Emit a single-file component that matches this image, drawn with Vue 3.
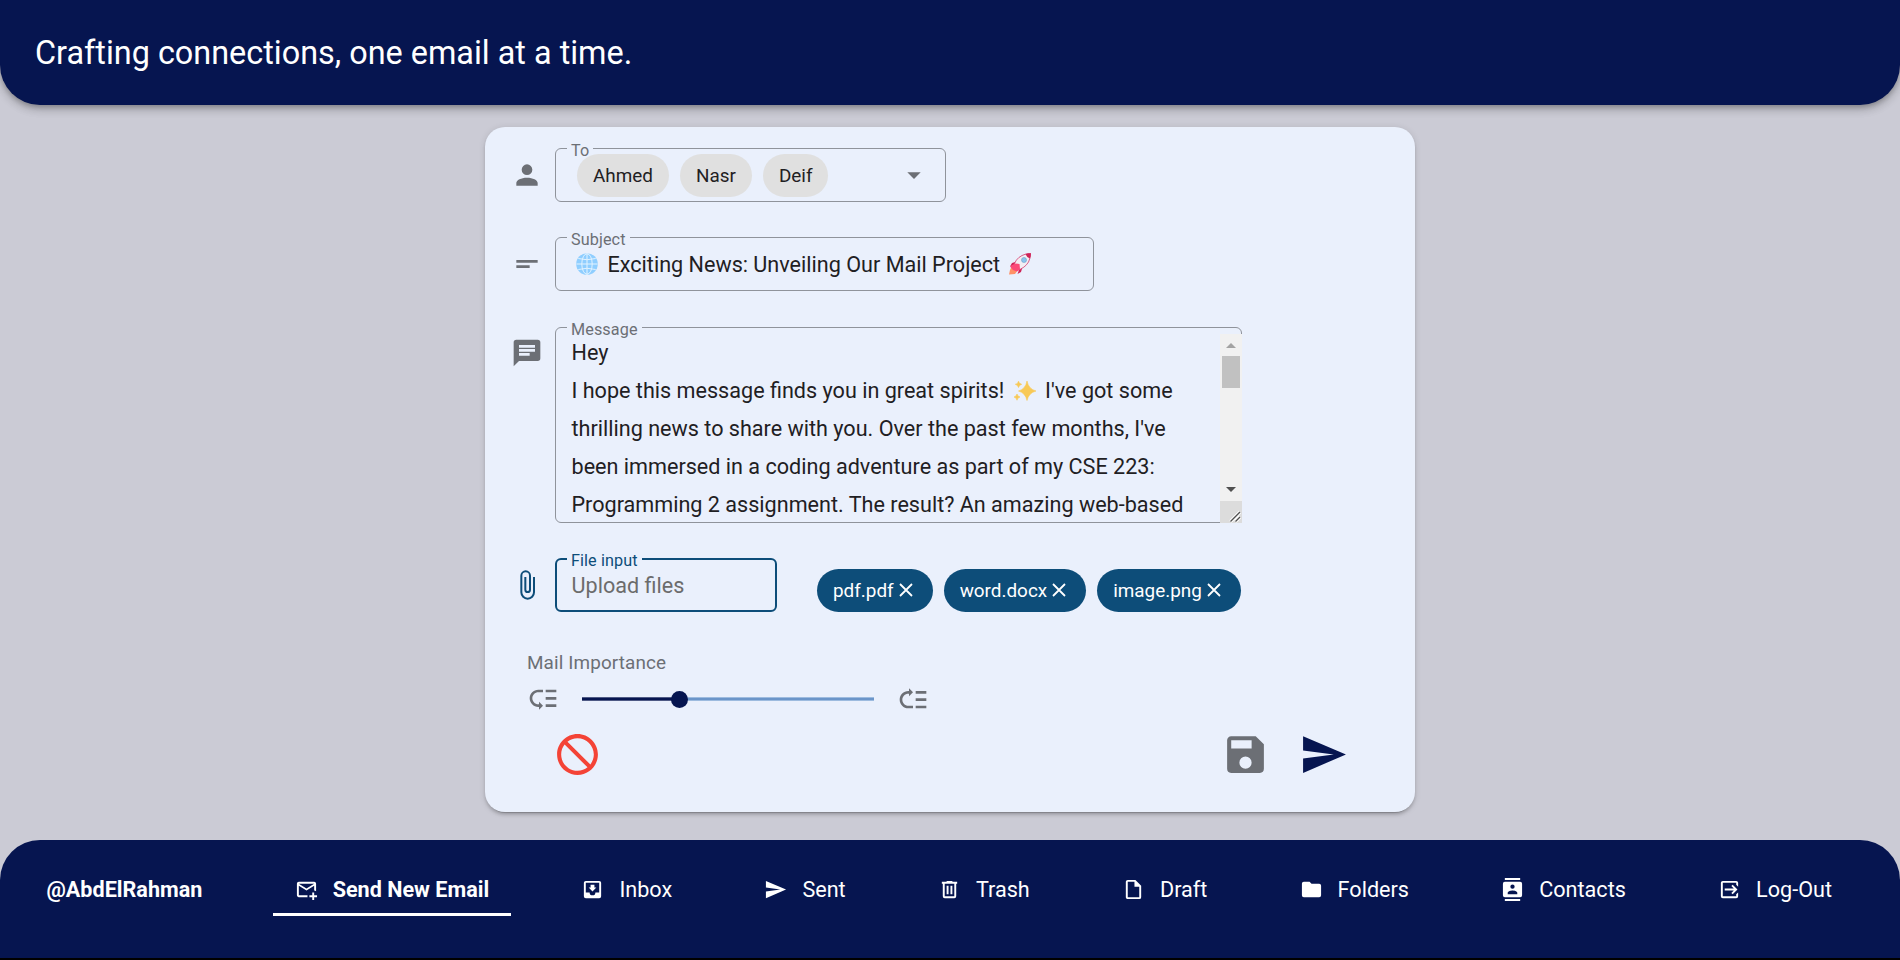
<script setup>
import { ref } from 'vue'

const recipients = ref(['Ahmed', 'Nasr', 'Deif'])
const files = ref(['pdf.pdf', 'word.docx', 'image.png'])
const importance = ref(33.4)

const icons = {
  account: 'M12,4A4,4 0 0,1 16,8A4,4 0 0,1 12,12A4,4 0 0,1 8,8A4,4 0 0,1 12,4M12,14C16.42,14 20,15.79 20,18V20H4V18C4,15.79 7.58,14 12,14Z',
  short: 'M4,9H20V11H4V9M4,13H14V15H4V13Z',
  comment: 'M20 2H4A2 2 0 0 0 2 4V22L6 18H20A2 2 0 0 0 22 16V4A2 2 0 0 0 20 2M6 9H18V11H6M14 14H6V12H14M18 8H6V6H18Z',
  clip: 'M16.5,6V17.5A4,4 0 0,1 12.5,21.5A4,4 0 0,1 8.5,17.5V5A2.5,2.5 0 0,1 11,2.5A2.5,2.5 0 0,1 13.5,5V15.5A1,1 0 0,1 12.5,16.5A1,1 0 0,1 11.5,15.5V6H10V15.5A2.5,2.5 0 0,0 12.5,18A2.5,2.5 0 0,0 15,15.5V5A4,4 0 0,0 11,1A4,4 0 0,0 7,5V17.5A5.5,5.5 0 0,0 12.5,23A5.5,5.5 0 0,0 18,17.5V6H16.5Z',
  down: 'M7,10L12,15L17,10H7Z',
  low: 'M14,5H22V7H14V5M14,10.5H22V12.5H14V10.5M14,16H22V18H14V16M2,11.5C2,15.08 4.92,18 8.5,18H9V20L12,17L9,14V16H8.5C6,16 4,14 4,11.5C4,9 6,7 8.5,7H12V5H8.5C4.92,5 2,7.92 2,11.5Z',
  high: 'M14,19H22V17H14V19M14,13.5H22V11.5H14V13.5M14,8H22V6H14V8M2,12.5C2,8.92 4.92,6 8.5,6H9V4L12,7L9,10V8H8.5C6,8 4,10 4,12.5C4,15 6,17 8.5,17H12V19H8.5C4.92,19 2,16.08 2,12.5Z',
  cancel: 'M12 2C17.5 2 22 6.5 22 12S17.5 22 12 22 2 17.5 2 12 6.5 2 12 2M12 4C10.1 4 8.4 4.6 7.1 5.7L18.3 16.9C19.3 15.5 20 13.8 20 12C20 7.6 16.4 4 12 4M16.9 18.3L5.7 7.1C4.6 8.4 4 10.1 4 12C4 16.4 7.6 20 12 20C13.9 20 15.6 19.4 16.9 18.3Z',
  save: 'M15,9H5V5H15M12,19A3,3 0 0,1 9,16A3,3 0 0,1 12,13A3,3 0 0,1 15,16A3,3 0 0,1 12,19M17,3H5C3.89,3 3,3.9 3,5V19A2,2 0 0,0 5,21H19A2,2 0 0,0 21,19V7L17,3Z',
  send: 'M2,21L23,12L2,3V10L17,12L2,14V21Z',
  emailPlus: 'M13 19C13 18.66 13.04 18.33 13.09 18H4V8L12 13L20 8V13.09C20.72 13.21 21.39 13.46 22 13.81V6C22 4.9 21.1 4 20 4H4C2.9 4 2 4.9 2 6V18C2 19.1 2.9 20 4 20H13.09C13.04 19.67 13 19.34 13 19M20 6L12 11L4 6H20M20 15V18H23V20H20V23H18V20H15V18H18V15H20Z',
  inbox: 'M16,10H14V7H10V10H8L12,14M19,15H15A3,3 0 0,1 12,18A3,3 0 0,1 9,15H5V5H19M19,3H5C3.89,3 3,3.9 3,5V19A2,2 0 0,0 5,21H19A2,2 0 0,0 21,19V5A2,2 0 0,0 19,3Z',
  trash: 'M9,3V4H4V6H5V19A2,2 0 0,0 7,21H17A2,2 0 0,0 19,19V6H20V4H15V3H9M7,6H17V19H7V6M9,8V17H11V8H9M13,8V17H15V8H13Z',
  file: 'M6,2H14L20,8V20A2,2 0 0,1 18,22H6C4.89,22 4,21.1 4,20V4C4,2.89 4.89,2 6,2M12,4H6V20H18V9H13V4H12Z',
  folder: 'M10,4H4C2.89,4 2,4.89 2,6V18A2,2 0 0,0 4,20H20A2,2 0 0,0 22,18V8C22,6.89 21.1,6 20,6H12L10,4Z',
  contacts: 'M20,0H4V2H20V0M4,24H20V22H4V24M20,4H4A2,2 0 0,0 2,6V18A2,2 0 0,0 4,20H20A2,2 0 0,0 22,18V6A2,2 0 0,0 20,4M12,6.75A2.25,2.25 0 0,1 14.25,9A2.25,2.25 0 0,1 12,11.25A2.25,2.25 0 0,1 9.75,9A2.25,2.25 0 0,1 12,6.75M17,17H7V15.5C7,13.83 10.33,13 12,13C13.67,13 17,13.83 17,15.5V17Z',
  exit: 'M19,3H5C3.89,3 3,3.89 3,5V19A2,2 0 0,0 5,21H19A2,2 0 0,0 21,19V15L19,17V19H5V5H19V7L21,9V5C21,3.89 20.1,3 19,3M13.92,8.42L16.5,11H7V13H16.5L13.92,15.58L15.33,17L20.33,12L15.33,7L13.92,8.42Z',
}

const nav = [
  { label: 'Send New Email', icon: 'emailPlus', active: true },
  { label: 'Inbox', icon: 'inbox' },
  { label: 'Sent', icon: 'send' },
  { label: 'Trash', icon: 'trash' },
  { label: 'Draft', icon: 'file' },
  { label: 'Folders', icon: 'folder' },
  { label: 'Contacts', icon: 'contacts' },
  { label: 'Log-Out', icon: 'exit' },
]
</script>

<template>
  <div class="page">
    <header class="top">Crafting connections, one email at a time.</header>

    <main class="main">
      <section class="card">
        <div class="row">
          <svg class="icon" viewBox="0 0 24 24"><path :d="icons.account" /></svg>
          <div class="field to">
            <span class="label">To</span>
            <span v-for="r in recipients" :key="r" class="chip">{{ r }}</span>
            <svg class="icon arrow" viewBox="0 0 24 24"><path :d="icons.down" /></svg>
          </div>
        </div>

        <div class="row">
          <svg class="icon" viewBox="0 0 24 24"><path :d="icons.short" /></svg>
          <div class="field subject">
            <span class="label">Subject</span>
            <svg class="emoji globe" viewBox="0 0 22 22">
              <circle cx="11" cy="11" r="10.8" fill="#8fceff" />
              <g fill="none" stroke="#e2f3ff" stroke-width="1">
                <ellipse cx="11" cy="11" rx="5.2" ry="10.3" />
                <path d="M11 .5V21.5M.5 11H21.5M2.3 5.5Q11 8 19.7 5.5M2.3 16.5Q11 14 19.7 16.5" />
              </g>
            </svg>
            <span class="value">Exciting News: Unveiling Our Mail Project</span>
            <svg class="emoji rocket" viewBox="0 0 22 22">
              <path d="M5 12 1 13.5 3 10 8 8.500zM10 17 8.500 21 12 19 13.500 14z" fill="#ce2357" />
              <path d="M2.500 14 5 13 9 17 6 21 0 21.500 1 17z" fill="#ff9166" />
              <path d="M4.500 14Q6 6 13 2.500Q18 0 21.700.3Q22 4 19.500 9Q16 15 8 17.500Z" fill="#f2eef3" stroke="#d5386c" stroke-width=".8" />
              <path d="M16.500 1.200Q19 .2 21.800.2Q22 3 20.800 5.500Q18 4.500 16.500 1.200" fill="#ce2357" />
              <path d="M1 13.500 6 10.500 10.500 11 11 16 8 18.500 4 17Z" fill="#fb4a77" />
              <circle cx="15" cy="7" r="2.500" fill="#8ac5ee" stroke="#6e9fca" stroke-width=".6" />
            </svg>
          </div>
        </div>

        <div class="row message-row">
          <svg class="icon" viewBox="0 0 24 24"><path :d="icons.comment" /></svg>
          <div class="field message">
            <span class="label">Message</span>
            <div class="text">
              <p>Hey</p>
              <p>I hope this message finds you in great spirits!
                <svg class="sparkle" viewBox="0 0 22 22">
                  <path d="M13 1Q14.500 9 22 11Q14.500 13 13 20.500Q11.500 13 4.500 11Q11.500 9 13 1M4.500 1.200Q5 4 7.700 4.300Q5 5 4.500 7.500Q4 5 1.300 4.300Q4 4 4.500 1.200M3 14Q3.500 16.500 6 17Q3.500 17.500 3 20.200Q2.500 17.500 0 17Q2.500 16.500 3 14" fill="#f8c956" stroke="#f8c956" stroke-width=".6" />
                </svg>
                I've got some</p>
              <p>thrilling news to share with you. Over the past few months, I've</p>
              <p>been immersed in a coding adventure as part of my CSE 223:</p>
              <p>Programming 2 assignment. The result? An amazing web-based</p>
            </div>
            <div class="scroll">
              <svg class="step" viewBox="0 0 22 22"><path d="M6 14h10l-5-5z" fill="#a3a3a3" /></svg>
              <div class="thumb"></div>
              <svg class="step" viewBox="0 0 22 22"><path d="M6 8h10l-5 5z" fill="#505050" /></svg>
              <svg class="grip" viewBox="0 0 22 22"><path d="M10.500 20.500 20 11M15.500 20.500 20 16" stroke="#fff" stroke-width="3.200" /><path d="M10.500 20.500 20 11M15.500 20.500 20 16" stroke="#505050" stroke-width="1.400" /></svg>
            </div>
          </div>
        </div>

        <div class="row file-row">
          <svg class="icon" viewBox="0 0 24 24"><path :d="icons.clip" /></svg>
          <div class="field file">
            <span class="label">File input</span>
            <span class="placeholder">Upload files</span>
          </div>
          <div class="files">
            <span v-for="f in files" :key="f" class="chip blue">
              {{ f }}<svg class="close" viewBox="0 0 14 14"><path d="M1 1 13 13M13 1 1 13" /></svg>
            </span>
          </div>
        </div>

        <div class="importance">
          <div class="caption">Mail Importance</div>
          <div class="slider-row">
            <svg class="icon" viewBox="0 0 24 24"><path :d="icons.low" /></svg>
            <div class="track">
              <div class="fill" :style="{ width: importance + '%' }"></div>
              <div class="knob" :style="{ left: importance + '%' }"></div>
            </div>
            <svg class="icon" viewBox="0 0 24 24"><path :d="icons.high" /></svg>
          </div>
        </div>

        <div class="actions">
          <svg class="big cancel" viewBox="0 0 24 24"><path :d="icons.cancel" /></svg>
          <svg class="big save" viewBox="0 0 24 24"><path :d="icons.save" /></svg>
          <svg class="big send" viewBox="0 0 24 24"><path :d="icons.send" /></svg>
        </div>
      </section>
    </main>

    <nav class="bottom">
      <div class="items">
        <div class="item user">@AbdElRahman</div>
        <div v-for="n in nav" :key="n.label" class="item" :class="{ active: n.active }">
          <svg class="nav-icon" viewBox="0 0 24 24"><path :d="icons[n.icon]" /></svg>
          <span>{{ n.label }}</span>
        </div>
      </div>
    </nav>
  </div>
</template>

<style>
body {
  background: #cbcbd5;
}
</style>

<style scoped>
* {
  box-sizing: border-box;
}
.page {
  height: 960px;
  display: flex;
  flex-direction: column;
  overflow: hidden;
  background: #cbcbd5;
  font-family: Roboto, "Liberation Sans", sans-serif;
  font-size: 21.6px;
  color: #1f2023;
}
.top {
  flex: none;
  height: 105px;
  display: flex;
  align-items: center;
  padding: 0 35px;
  background: #061550;
  color: #fff;
  font-size: 32.4px;
  border-radius: 0 0 40px 40px;
  box-shadow: 0 3px 5px -1px rgba(0, 0, 0, 0.2), 0 5px 8px rgba(0, 0, 0, 0.14), 0 1px 14px rgba(0, 0, 0, 0.12);
}
.main {
  flex: 1;
  display: flex;
  justify-content: center;
  align-items: flex-start;
  padding-top: 22px;
}
.card {
  width: 930px;
  height: 685px;
  padding: 21px 26px 0;
  border-radius: 20px;
  background: #eaf0fc;
  box-shadow: 0 4px 1px -3px rgba(0, 0, 0, 0.2), 0 3px 3px rgba(0, 0, 0, 0.14), 0 1px 7px rgba(0, 0, 0, 0.12);
  display: flex;
  flex-direction: column;
}
.row {
  display: flex;
  align-items: center;
  gap: 12px;
  margin-bottom: 35px;
}
.icon {
  flex: none;
  width: 32px;
  height: 32px;
  fill: #6c6f75;
}
.field {
  position: relative;
  height: 54px;
  border: 1px solid #8f939b;
  border-radius: 6px;
  display: flex;
  align-items: center;
  padding: 0 15.5px;
  white-space: nowrap;
}
.label {
  position: absolute;
  left: 11px;
  top: -10px;
  padding: 0 4px;
  height: 24px;
  line-height: 24px;
  font-size: 16.2px;
  letter-spacing: 0.1px;
  color: #6c6f75;
  background: linear-gradient(#eaf0fc, #eaf0fc) 0 8px / 100% 4px no-repeat;
}
.to {
  width: 391px;
  padding-left: 21px;
}
.chip {
  height: 43px;
  display: flex;
  align-items: center;
  padding: 0 16px;
  margin-right: 11px;
  border-radius: 22px;
  background: #e0e0e0;
  font-size: 18.9px;
}
.arrow {
  margin-left: auto;
}
.subject {
  width: 539px;
}
.emoji {
  width: 22px;
  height: 22px;
  flex: none;
}
.globe {
  margin: 0 10px 0 4px;
}
.rocket {
  margin-left: 9px;
}
.row:nth-child(2) {
  margin-bottom: 36px;
}
.message-row {
  align-items: flex-start;
}
.message-row > .icon {
  margin-top: 10px;
}
.message {
  width: 687px;
  height: 196px;
}
.text {
  align-self: flex-start;
  padding-top: 6px;
}
.text p {
  margin: 0;
  height: 38px;
  line-height: 38px;
}
.sparkle {
  width: 22px;
  height: 22px;
  margin: 0 4px;
  vertical-align: -4px;
}
.scroll {
  position: absolute;
  right: -1px;
  top: 6px;
  bottom: -1px;
  width: 22px;
  background: #f1f1f1;
  display: flex;
  flex-direction: column;
}
.step,
.grip {
  width: 22px;
  height: 22px;
  flex: none;
}
.thumb {
  height: 32px;
  margin: 0 2px auto;
  background: #c1c1c1;
}
.grip {
  background: #dcdcdc;
}
.file {
  width: 222px;
  border: 2px solid #0d4d79;
  padding: 0 14.5px;
}
.file .label {
  left: 10px;
  top: -11px;
  color: #0d4d79;
}
.placeholder {
  color: #6c6c6c;
}
.file-row .icon {
  fill: #0d4d79;
}
.files {
  display: flex;
  align-self: flex-end;
  margin-left: 28px;
}
.blue {
  background: #0d4d79;
  color: #fff;
  padding-right: 20px;
}
.close {
  width: 14px;
  height: 14px;
  margin: -2px 0 0 5px;
  stroke: #fff;
  stroke-width: 1.8;
}
.file-row {
  margin-bottom: 37px;
}
.importance {
  padding-left: 16px;
}
.caption {
  height: 28px;
  line-height: 28px;
  font-size: 18.9px;
  letter-spacing: 0.12px;
  color: #6c6f75;
}
.slider-row {
  display: flex;
  align-items: center;
  height: 44px;
}
.slider-row .track {
  position: relative;
  width: 292px;
  height: 4px;
  margin: 0 23px;
  background: linear-gradient(#9dbbdf 1px, #6b95c9 1px, #6b95c9 3px, #9dbbdf 3px);
}
.fill {
  height: 100%;
  background: linear-gradient(#4f5a85 1px, #061550 1px, #061550 3px, #4f5a85 3px);
}
.knob {
  position: absolute;
  top: -6.5px;
  width: 17px;
  height: 17px;
  margin-left: -9px;
  border-radius: 50%;
  background: #061550;
}
.actions {
  display: flex;
  align-items: center;
  height: 49px;
  margin-top: 9px;
  padding: 0 41px 0 42px;
}
.big {
  width: 49px;
  height: 49px;
}
.cancel {
  fill: #f44336;
}
.save {
  fill: #6c6f75;
  margin-left: auto;
  margin-right: 29px;
}
.send {
  fill: #061550;
}
.bottom {
  flex: none;
  height: 120px;
  background: #061550;
  border-bottom: 2px solid #000;
  border-radius: 40px 40px 0 0;
  color: #fff;
}
.items {
  display: flex;
  justify-content: space-between;
  padding: 22px 46px 0 24.5px;
}
.item {
  height: 54px;
  display: flex;
  align-items: center;
  padding: 0 22px;
  font-size: 21.6px;
  white-space: nowrap;
}
.user,
.active {
  font-weight: 700;
}
.active {
  box-shadow: inset 0 -3px #fff;
}
.nav-icon {
  width: 23px;
  height: 23px;
  margin-right: 15px;
  fill: #fff;
}
</style>
